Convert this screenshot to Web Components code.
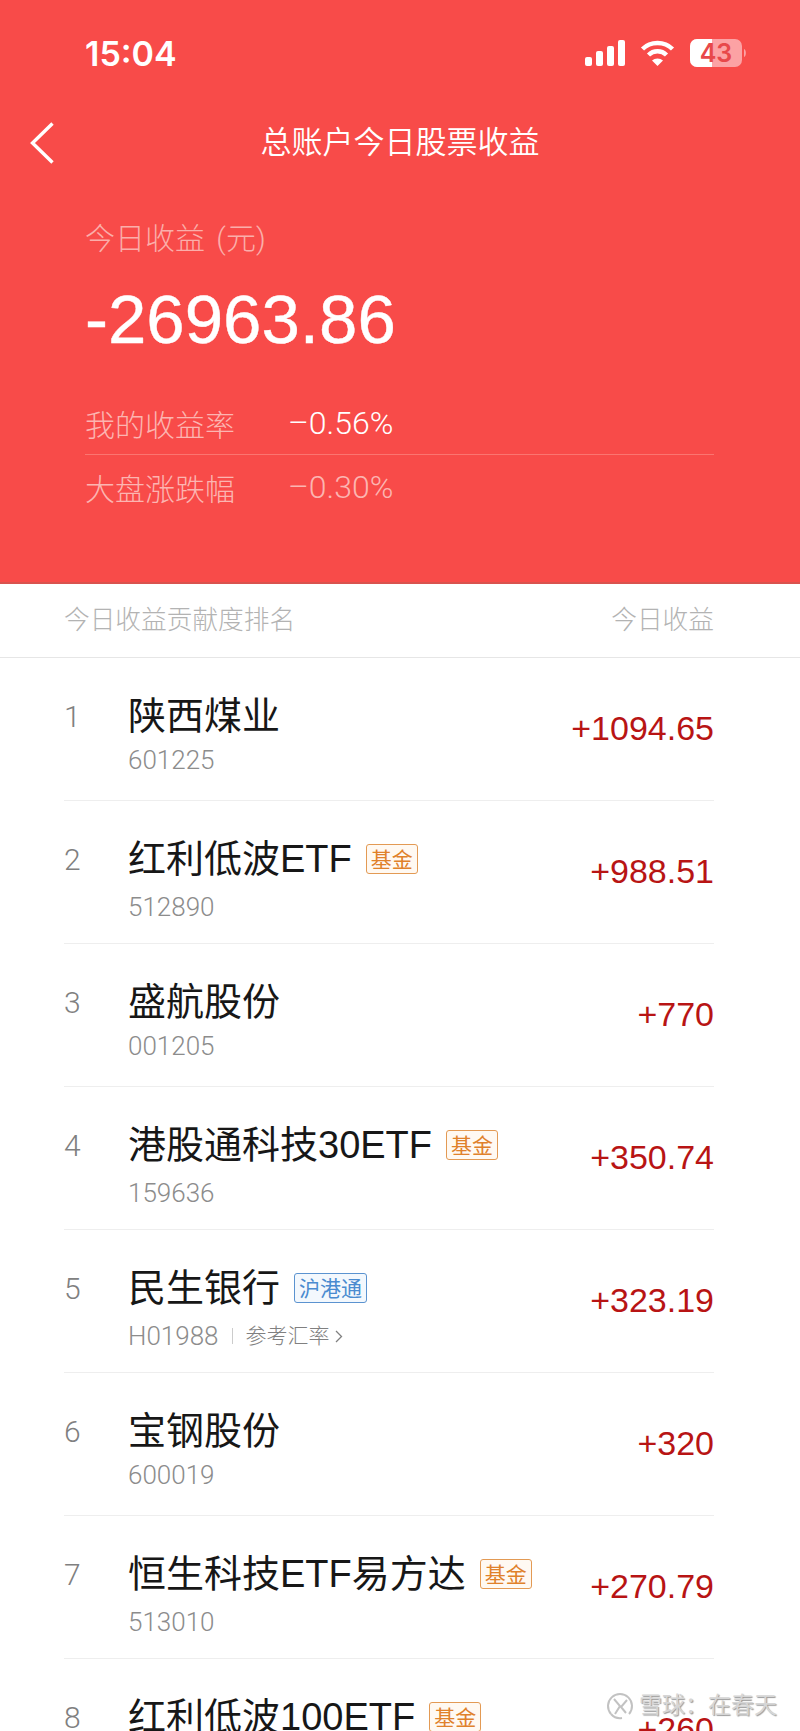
<!doctype html>
<html lang="zh">
<head>
<meta charset="utf-8" />
<title>总账户今日股票收益</title>
<style>
  html, body { margin: 0; height: 1731px; overflow: hidden; background: #fff; }
  body {
    position: relative;
    font-family: "Roboto", "Noto Sans CJK SC", sans-serif;
    font-weight: 300;
  }
</style>
</head>
<body>
<profit-panel
  title="总账户今日股票收益"
  label="今日收益 (元)"
  amount="-26963.86"
  rate="–0.56%"
  market="–0.30%"
></profit-panel>
<rank-list>
  <rank-row rank="1" name="陕西煤业" code="601225" value="+1094.65"></rank-row>
  <rank-row rank="2" name="红利低波ETF" code="512890" value="+988.51"><tag-badge>基金</tag-badge></rank-row>
  <rank-row rank="3" name="盛航股份" code="001205" value="+770"></rank-row>
  <rank-row rank="4" name="港股通科技30ETF" code="159636" value="+350.74"><tag-badge>基金</tag-badge></rank-row>
  <rank-row rank="5" name="民生银行" code="H01988" value="+323.19" rate-link><tag-badge kind="blue">沪港通</tag-badge></rank-row>
  <rank-row rank="6" name="宝钢股份" code="600019" value="+320"></rank-row>
  <rank-row rank="7" name="恒生科技ETF易方达" code="513010" value="+270.79"><tag-badge>基金</tag-badge></rank-row>
  <rank-row rank="8" name="红利低波100ETF" value="+260"><tag-badge>基金</tag-badge></rank-row>
</rank-list>
<snow-mark></snow-mark>

<template id="status-bar">
  <style>
    :host { display: flex; align-items: center; justify-content: space-between; height: 106px; padding: 0 58px 0 85px; color: #fff; }
    .time { font: 600 34px "Inter", "Liberation Sans", sans-serif; }
    .icons { display: flex; align-items: center; gap: 15px; }
    svg { display: block; }
    .battery { position: relative; width: 52px; height: 28px; }
    .battery b {
      position: absolute; left: 0; top: 0; width: 52px; height: 28px;
      font: 600 25px/28px "Inter", "Liberation Sans", sans-serif; text-align: center; color: #e8484a;
    }
    .battery svg { overflow: visible; }
  </style>
  <div class="time">15:04</div>
  <div class="icons">
    <svg width="40" height="26" viewBox="0 0 40 26" fill="#fff">
      <rect x="0" y="17" width="7" height="9" rx="2" />
      <rect x="11" y="11" width="7" height="15" rx="2" />
      <rect x="22" y="6" width="7" height="20" rx="2" />
      <rect x="33" y="0" width="7" height="26" rx="2" />
    </svg>
    <svg width="35" height="26" viewBox="0 0 34 26" fill="none" stroke="#fff" stroke-width="4.4">
      <path d="M2 9 C10 1 24 1 32 9" />
      <path d="M8 15 C13 10 21 10 26 15" />
      <path d="M17 26 L11.5 20.5 C14.5 17.8 19.5 17.8 22.5 20.5 Z" fill="#fff" stroke="none" />
    </svg>
    <div class="battery">
      <svg width="52" height="28" viewBox="0 0 52 28">
        <rect x="0" y="0" width="52" height="28" rx="7" fill="#fca2a4" />
        <path d="M7 0 H22 V28 H7 A7 7 0 0 1 0 21 V7 A7 7 0 0 1 7 0 Z" fill="#fff" />
        <path d="M54 10 C56.5 11 56.5 17 54 18 Z" fill="#fca2a4" />
      </svg>
      <b>43</b>
    </div>
  </div>
</template>

<template id="nav-bar">
  <style>
    :host { display: block; height: 73px; color: #fff; }
    .bar { display: flex; align-items: center; height: 73px; padding-left: 30px; }
    svg { display: block; flex: none; }
    .title { flex: 1; margin: 0 54px 6px 0; text-align: center; font-size: 31px; font-weight: 350; }
  </style>
  <div class="bar">
    <svg width="24" height="42" viewBox="0 0 24 42" fill="none" stroke="#fff" stroke-width="3.4">
      <path d="M22.5 1.5 L2.5 21 L22.5 40.5" />
    </svg>
    <div class="title"><slot></slot></div>
  </div>
</template>

<template id="profit-panel">
  <style>
    :host {
      display: block; box-sizing: border-box; height: 584px; background: #f84b49; border-bottom: 2px solid #d9534e;
      color: #fff; font-family: "Roboto", "Noto Sans CJK SC", sans-serif; font-weight: 300;
    }
    .body { padding: 39px 86px 0 85px; }
    .label { font-size: 30px; word-spacing: 4px; line-height: 42px; color: #fbaeaa; }
    .amount { margin-top: 20px; font: 400 69px/80px "Liberation Sans", sans-serif; -webkit-text-stroke: 0.4px #fff; }
    .stat { display: flex; align-items: center; height: 63px; font-size: 30px; }
    .stat + .stat { border-top: 1px solid #fb7570; }
    .stat span:first-child { width: 203px; color: #fcb5b1; }
    .stat span:last-child { font-size: 32px; }
    .first { margin-top: 31px; }
    .white { color: #fff; }
    .dim { color: #fcb5b1; }
  </style>
  <status-bar></status-bar>
  <nav-bar id="title"></nav-bar>
  <div class="body">
    <div class="label" id="label"></div>
    <div class="amount" id="amount"></div>
    <div class="stat first"><span>我的收益率</span><span class="white" id="rate"></span></div>
    <div class="stat"><span>大盘涨跌幅</span><span class="dim" id="market"></span></div>
  </div>
</template>

<template id="rank-list">
  <style>
    :host { display: block; background: #fff; }
    .head {
      display: flex; justify-content: space-between; align-items: center;
      height: 73px; padding: 0 86px 0 64px; border-bottom: 1px solid #e6e6e6;
      font-size: 25.7px; color: #b3b3b3;
    }
    .head span { margin-bottom: 6px; }
  </style>
  <div class="head"><span>今日收益贡献度排名</span><span>今日收益</span></div>
  <slot></slot>
</template>

<template id="rank-row">
  <style>
    :host { display: block; padding: 0 86px 0 64px; }
    .row { display: flex; height: 142px; border-bottom: 1px solid #eeeeee; }
    .rank { width: 64px; padding-top: 39px; font-size: 30px; line-height: 40px; color: #808080; }
    .main { flex: 1; padding-top: 32px; }
    .name {
      display: flex; align-items: flex-start; gap: 14px; font-size: 38px; line-height: 52px; color: #171717; font-weight: 400;
      font-family: "Liberation Sans", "Noto Sans CJK SC", sans-serif;
    }
    .code { display: flex; align-items: center; margin-top: 2px; font-size: 26px; line-height: 32px; color: #8c8c8c; }
    .sep { width: 1px; height: 16px; margin: 0 13px; background: #cccccc; }
    .link { font-size: 21px; color: #808080; }
    svg.link { margin-left: 5px; }
    .value { padding-top: 45px; font: 400 34px/50px "Liberation Sans", sans-serif; color: #b81414; }
  </style>
  <div class="row">
    <div class="rank" id="rank"></div>
    <div class="main">
      <div class="name"><span id="name"></span><slot></slot></div>
      <div class="code"><span id="code"></span><span id="extra" style="display:none;align-items:center"><i class="sep"></i><span class="link">参考汇率</span><svg class="link" width="8" height="13" viewBox="0 0 8 13" fill="none" stroke="#808080" stroke-width="1.3"><path d="M1 1 L6.5 6.5 L1 12" /></svg></span></div>
    </div>
    <div class="value" id="value"></div>
  </div>
</template>

<template id="tag-badge">
  <style>
    :host {
      display: inline-block; height: 28px; margin: 11px 0 15px; padding: 0 4px; border: 1px solid #e39a54; border-radius: 3px;
      font-family: "Noto Sans CJK SC", sans-serif;
      font-size: 21px; line-height: 27px; font-weight: 400; color: #e0812b; background: #fff9f2;
    }
    :host([kind="blue"]) { border-color: #5b93d0; color: #4a8bd0; background: #f3f8fd; }
  </style>
  <slot></slot>
</template>

<template id="snow-mark">
  <style>
    :host {
      position: absolute; right: 23px; top: 1691px; display: flex; align-items: center; gap: 5px;
      font-size: 23px; line-height: 30px; font-weight: 400; color: #d6d6d6;
      text-shadow: 1px 1px 1px #9a9a9a;
    }
    svg { display: block; }
  </style>
  <svg width="28" height="28" viewBox="0 0 28 28" fill="none" stroke="#c2c2c2" stroke-width="2">
    <path d="M5 22 A12 12 0 1 1 23 22" />
    <path d="M5 22 A12 12 0 0 0 16 26" />
    <path d="M8 7 L14 14 L9 22 M21 8 L15 15 L20 21" />
  </svg>
  <span>雪球：在春天</span>
</template>

<script>
  function fromTemplate(host, id) {
    var shadow = host.attachShadow({ mode: "open" });
    shadow.appendChild(document.getElementById(id).content.cloneNode(true));
    return shadow;
  }

  class StatusBar extends HTMLElement {
    constructor() {
      super();
      fromTemplate(this, "status-bar");
    }
  }
  class NavBar extends HTMLElement {
    constructor() {
      super();
      fromTemplate(this, "nav-bar");
    }
  }
  class ProfitPanel extends HTMLElement {
    constructor() {
      super();
      this.shadow = fromTemplate(this, "profit-panel");
    }
    connectedCallback() {
      ["title", "label", "amount", "rate", "market"].forEach((key) => {
        this.shadow.getElementById(key).textContent = this.getAttribute(key);
      });
    }
  }
  class RankList extends HTMLElement {
    constructor() {
      super();
      fromTemplate(this, "rank-list");
    }
  }
  class RankRow extends HTMLElement {
    constructor() {
      super();
      this.shadow = fromTemplate(this, "rank-row");
    }
    connectedCallback() {
      ["rank", "name", "code", "value"].forEach((key) => {
        this.shadow.getElementById(key).textContent = this.getAttribute(key);
      });
      if (this.hasAttribute("rate-link")) {
        this.shadow.getElementById("extra").style.display = "inline-flex";
      }
    }
  }
  class TagBadge extends HTMLElement {
    constructor() {
      super();
      fromTemplate(this, "tag-badge");
    }
  }
  class SnowMark extends HTMLElement {
    constructor() {
      super();
      fromTemplate(this, "snow-mark");
    }
  }
  customElements.define("status-bar", StatusBar);
  customElements.define("nav-bar", NavBar);
  customElements.define("profit-panel", ProfitPanel);
  customElements.define("rank-list", RankList);
  customElements.define("rank-row", RankRow);
  customElements.define("tag-badge", TagBadge);
  customElements.define("snow-mark", SnowMark);
</script>
</body>
</html>
